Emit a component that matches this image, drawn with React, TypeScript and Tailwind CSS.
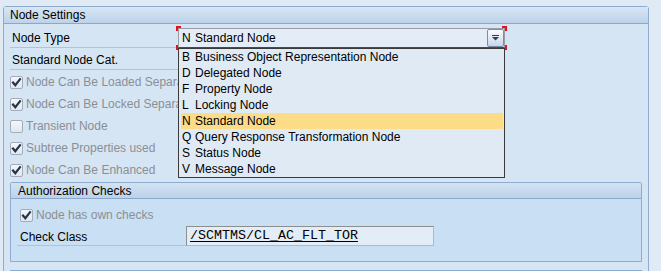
import React from "react";

const Check = ({ checked }: { checked: boolean }) => (
  <div className="w-[13px] h-[13px] shrink-0 rounded-[2px] border border-[#a3acb8] bg-gradient-to-b from-[#f3f6fa] to-[#e1e8f0] flex items-center justify-center">
    {checked && (
      <svg width="11" height="11" viewBox="0 0 11 11">
        <path d="M2 5.5 L4.3 8.2 L9 2.2" stroke="#25344d" strokeWidth="2.2" fill="none" strokeLinecap="square" />
      </svg>
    )}
  </div>
);

const CheckRow = ({ checked, label }: { checked: boolean; label: string }) => (
  <div className="w-[168px] overflow-hidden h-[22px] flex items-center gap-[3px] whitespace-nowrap text-[#8b8f95]">
    <Check checked={checked} />
    <span>{label}</span>
  </div>
);

const items: [string, string][] = [
  ["B", "Business Object Representation Node"],
  ["D", "Delegated Node"],
  ["F", "Property Node"],
  ["L", "Locking Node"],
  ["N", "Standard Node"],
  ["Q", "Query Response Transformation Node"],
  ["S", "Status Node"],
  ["V", "Message Node"],
];

export default function App() {
  return (
    <div className="w-[661px] h-[271px] overflow-hidden bg-[#dfeaf5] pt-[6px] pl-[3px] text-[12px] leading-[14px] text-black font-['Liberation_Sans',Arial,sans-serif]">
      <div className="w-[646px] h-[290px] border border-[#8eabd0] rounded-t-[3px] bg-[#d5e5f4]">
        <div className="h-[17px] border-b border-[#8aa8cd] bg-gradient-to-b from-[#d8e6f4] to-[#bdd3ea] pl-[6px] flex items-center">
          Node Settings
        </div>
        <div className="pl-[6px] pr-[6px]">
          {/* Node Type row */}
          <div className="flex">
            <div className="w-[168px] h-[24px] border-b border-[#b0c3d8] pl-[2px] pt-[7px]">Node Type</div>
            <div className="relative mt-[4px] w-[327px] h-[20px]">
              <div className="h-[20px] border border-[#9a9ea4] border-b-[#4a4a4a] bg-[#e4edf7] flex items-center pl-[3px] whitespace-nowrap">
                <span className="w-[13px]">N</span>
                <span>Standard Node</span>
              </div>
              <div className="absolute right-[1px] top-[1px] w-[17px] h-[18px] rounded-[2px] border border-[#7b8ea9] bg-gradient-to-b from-[#fbfcfe] to-[#c9d6e7] flex items-center justify-center">
                <svg width="9" height="6" viewBox="0 0 9 6">
                  <rect x="1" y="0" width="7" height="1" fill="#2c3f63" />
                  <path d="M1 2 H8 L4.5 5.5 Z" fill="#2c3f63" />
                </svg>
              </div>
              {/* focus corners */}
              <div className="absolute left-[-2px] top-[-2px] w-[5px] h-[5px] border-l-2 border-t-2 border-[#e8101a]" />
              <div className="absolute right-[-2px] top-[-2px] w-[5px] h-[5px] border-r-2 border-t-2 border-[#e8101a]" />
              <div className="absolute left-[-2px] bottom-[-2px] w-[5px] h-[5px] border-l-2 border-b-2 border-[#e8101a]" />
              <div className="absolute right-[-2px] bottom-[-2px] w-[5px] h-[5px] border-r-2 border-b-2 border-[#e8101a]" />
              {/* dropdown list */}
              <div className="absolute left-0 top-[20px] z-10 w-[327px] border border-[#3a3a3a] bg-[#dfeaf5] pl-[2px] pr-[1px]">
                {items.map(([k, v]) => (
                  <div
                    key={k}
                    className={`h-[16px] flex items-center pl-[1px] whitespace-nowrap ${k === "N" ? "bg-[#fddc88]" : ""}`}
                  >
                    <span className="w-[13px]">{k}</span>
                    <span>{v}</span>
                  </div>
                ))}
              </div>
            </div>
          </div>
          {/* Standard Node Cat. row */}
          <div className="w-[168px] h-[22px] border-b border-[#b0c3d8] pl-[2px] pt-[5px]">Standard Node Cat.</div>
          <div className="pt-[1px]">
            <CheckRow checked label="Node Can Be Loaded Separately" />
            <CheckRow checked label="Node Can Be Locked Separately" />
            <CheckRow checked={false} label="Transient Node" />
            <CheckRow checked label="Subtree Properties used" />
            <CheckRow checked label="Node Can Be Enhanced" />
          </div>
          {/* Authorization Checks group */}
          <div className="mt-[1px] w-[632px] border border-[#8eabd0] rounded-t-[2px] bg-[#c9dff3]">
            <div className="h-[16px] border-b border-[#8aa8cd] bg-gradient-to-b from-[#d4e3f2] to-[#bcd2e9] pl-[7px] flex items-center">
              Authorization Checks
            </div>
            <div className="pl-[6px] pt-[5px] pb-[15px]">
              <div className="pl-[3px] h-[22px] flex items-center gap-[3px] text-[#8b8f95]">
                <Check checked />
                <span>Node has own checks</span>
              </div>
              <div className="flex">
                <div className="w-[169px] h-[20px] border-b border-[#b0c3d8] pl-[3px] pt-[4px]">Check Class</div>
                <div className="w-[248px] h-[20px] border border-[#8e8e8e] border-b-[#b8b8b8] border-r-[#b8b8b8] bg-[#e2edf8] pl-[3px] flex items-center font-['Liberation_Mono',monospace] text-[13.33px] underline underline-offset-[2px]">
                  /SCMTMS/CL_AC_FLT_TOR
                </div>
              </div>
            </div>
          </div>
          <div className="mt-[8px] w-[632px] border-t border-[#8eabd0]" />
        </div>
      </div>
    </div>
  );
}
